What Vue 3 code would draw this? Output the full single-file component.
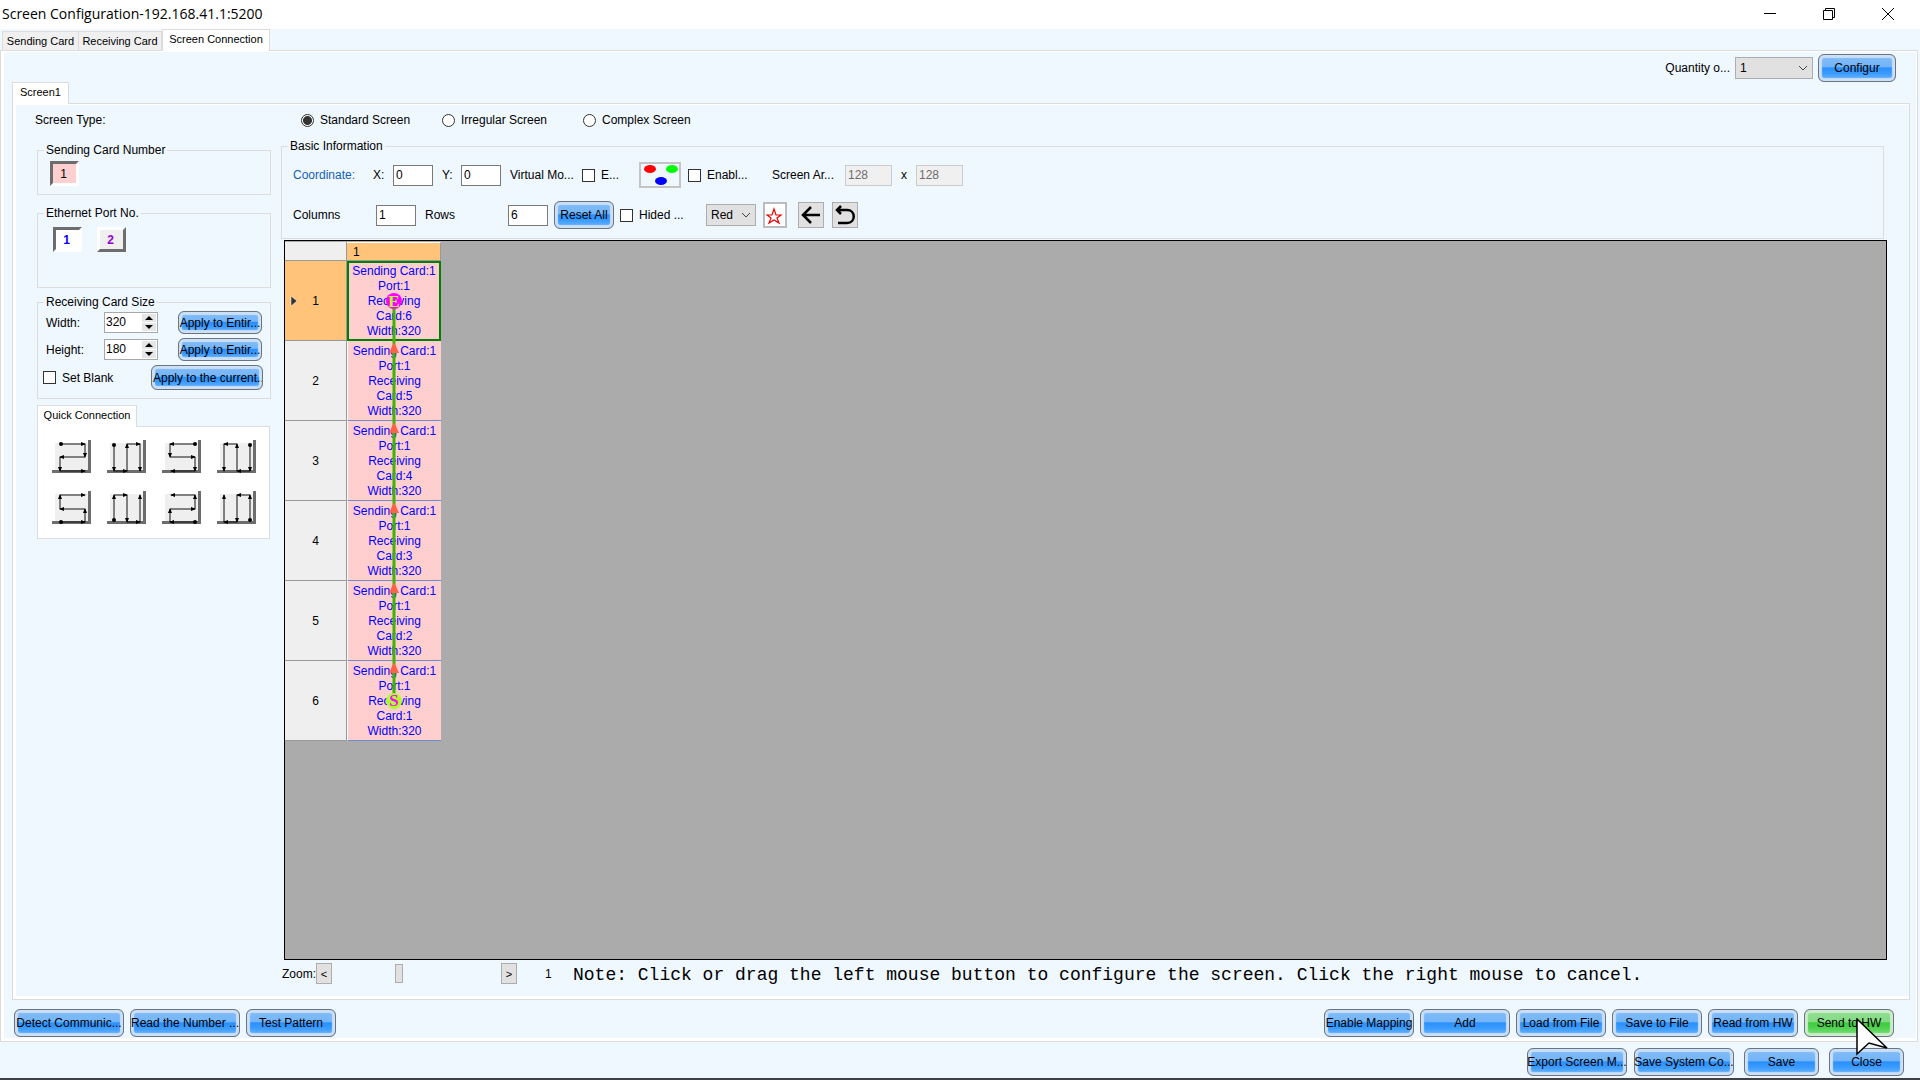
<script setup>
import { ref } from 'vue'

const mainTabs = ['Sending Card', 'Receiving Card', 'Screen Connection']
const activeTab = ref('Screen Connection')
const screenTypes = ['Standard Screen', 'Irregular Screen', 'Complex Screen']
const screenType = ref('Standard Screen')
const cardWidth = ref('320')
const cardHeight = ref('180')
const color = ref('Red')
const quantity = ref('1')

const rows = [1, 2, 3, 4, 5, 6].map((n) => ({ n, card: 7 - n }))

const routes = [
  ['Rows from top left', [[9, 4], [33, 4], [33, 17], [8, 17], [8, 31], [33, 31]]],
  ['Columns from top left', [[7, 5], [7, 31], [20, 31], [20, 4], [33, 4], [33, 31]]],
  ['Rows from top right', [[33, 4], [8, 4], [8, 17], [33, 17], [33, 31], [9, 31]]],
  ['Columns from top right', [[33, 5], [33, 31], [20, 31], [20, 4], [7, 4], [7, 31]]],
  ['Rows from bottom left', [[9, 31], [33, 31], [33, 18], [8, 18], [8, 4], [33, 4]]],
  ['Columns from bottom left', [[7, 29], [7, 4], [20, 4], [20, 31], [33, 31], [33, 4]]],
  ['Rows from bottom right', [[33, 31], [8, 31], [8, 18], [33, 18], [33, 4], [9, 4]]],
  ['Columns from bottom right', [[33, 29], [33, 4], [20, 4], [20, 31], [7, 31], [7, 4]]]
].map(([name, points]) => ({
  name,
  start: points[0],
  line: points.map((p) => p.join(',')).join(' '),
  // one arrow head at the end of every segment
  heads: points.slice(1).map(([x, y], i) => {
    const dx = Math.sign(x - points[i][0])
    const dy = Math.sign(y - points[i][1])
    const bx = x - dx * 4
    const by = y - dy * 4
    return `${x + dx},${y + dy} ${bx + dy * 2},${by + dx * 2} ${bx - dy * 2},${by - dx * 2}`
  })
}))

const leftActions = [
  ['Detect Communic...', 'w110'],
  ['Read the Number ...', 'w110'],
  ['Test Pattern', 'w90']
]
const rightActions = ['Enable Mapping', 'Add', 'Load from File', 'Save to File', 'Read from HW']
</script>

<template>
  <div class="window">
    <header class="titlebar">
      <h1>Screen Configuration-192.168.41.1:5200</h1>
      <div class="controls">
        <button type="button" aria-label="Minimize">
          <svg width="14" height="14"><path d="M1 6.5H13" /></svg>
        </button>
        <button type="button" aria-label="Restore">
          <svg width="14" height="14"><path d="M1.5 3.5H10.500V12.500H1.500ZM3.500 3.500V1.500H12.500V10.500H10.500" /></svg>
        </button>
        <button type="button" aria-label="Close window">
          <svg width="14" height="14"><path d="M1 1L13 13M13 1L1 13" /></svg>
        </button>
      </div>
    </header>

    <nav class="tabs main-tabs">
      <button
        v-for="t in mainTabs"
        :key="t"
        type="button"
        class="tab"
        :class="{ active: t === activeTab }"
        @click="activeTab = t"
      >{{ t }}</button>
    </nav>

    <main class="outer">
      <div class="quantity">
        <label for="qty">Quantity o...</label>
        <div class="select qty">
          <select id="qty" v-model="quantity"><option>1</option><option>2</option></select>
          <svg width="10" height="6"><path d="M1 1L5 5L9 1" /></svg>
        </div>
        <button type="button" class="btn w78">Configur</button>
      </div>

      <div class="tabs screen-tabs">
        <button type="button" class="tab active">Screen1</button>
      </div>

      <section class="inner">
        <div class="types">
          <span class="types-title">Screen Type:</span>
          <label v-for="t in screenTypes" :key="t" class="type">
            <input v-model="screenType" type="radio" name="type" :value="t" />{{ t }}
          </label>
        </div>

        <div class="columns">
          <aside class="side">
            <fieldset class="sending">
              <legend>Sending Card Number</legend>
              <button type="button" class="chip pressed pink">1</button>
            </fieldset>

            <fieldset class="ports">
              <legend>Ethernet Port No.</legend>
              <button type="button" class="chip bold pressed blue">1</button>
              <button type="button" class="chip bold raised purple">2</button>
            </fieldset>

            <fieldset class="size">
              <legend>Receiving Card Size</legend>
              <div class="size-row">
                <label for="cw">Width:</label>
                <div class="spin">
                  <input id="cw" v-model="cardWidth" type="text" />
                  <svg width="14" height="17"><path class="key" d="M0 0H14V8H0ZM0 9H14V17H0Z" /><path d="M3 6H11L7 2ZM3 11H11L7 15Z" /></svg>
                </div>
                <button type="button" class="btn small">Apply to Entir...</button>
              </div>
              <div class="size-row">
                <label for="ch">Height:</label>
                <div class="spin">
                  <input id="ch" v-model="cardHeight" type="text" />
                  <svg width="14" height="17"><path class="key" d="M0 0H14V8H0ZM0 9H14V17H0Z" /><path d="M3 6H11L7 2ZM3 11H11L7 15Z" /></svg>
                </div>
                <button type="button" class="btn small">Apply to Entir...</button>
              </div>
              <div class="blank-row">
                <label class="check"><input type="checkbox" />Set Blank</label>
                <button type="button" class="btn current">Apply to the current...</button>
              </div>
            </fieldset>

            <div class="tabs quick-tabs">
              <button type="button" class="tab active">Quick Connection</button>
            </div>
            <div class="quick">
              <button v-for="r in routes" :key="r.name" type="button" :aria-label="r.name">
                <svg width="39" height="33">
                  <rect x="3" y="3" width="33" height="27" fill="#efefef" />
                  <path d="M36 0H39V33H0V30H36Z" fill="#6d6d6d" />
                  <polyline :points="r.line" fill="none" stroke="#111" />
                  <circle :cx="r.start[0]" :cy="r.start[1]" r="2" />
                  <polygon v-for="h in r.heads" :key="h" :points="h" />
                </svg>
              </button>
            </div>
          </aside>

          <div class="work">
            <fieldset class="basic">
              <legend>Basic Information</legend>
              <div class="basic-row first">
                <span class="coord">Coordinate:</span>
                <label for="px">X:</label>
                <input id="px" class="box" type="text" value="0" />
                <label for="py">Y:</label>
                <input id="py" class="box" type="text" value="0" />
                <span>Virtual Mo...</span>
                <label class="check"><input type="checkbox" />E...</label>
                <button type="button" class="rgb" aria-label="Pixel layout">
                  <svg width="36" height="20">
                    <ellipse cx="8" cy="4" rx="6" ry="4" fill="#f00" />
                    <ellipse cx="30" cy="4" rx="6" ry="4" fill="#0f0" />
                    <ellipse cx="19" cy="16" rx="6" ry="4" fill="#00f" />
                  </svg>
                </button>
                <label class="check"><input type="checkbox" />Enabl...</label>
                <label for="aw">Screen Ar...</label>
                <input id="aw" class="box area" type="text" value="128" disabled />
                <label for="ah">x</label>
                <input id="ah" class="box area" type="text" value="128" disabled />
              </div>
              <div class="basic-row second">
                <label for="cols">Columns</label>
                <input id="cols" class="box" type="text" value="1" />
                <label for="rws">Rows</label>
                <input id="rws" class="box" type="text" value="6" />
                <button type="button" class="btn reset">Reset All</button>
                <label class="check"><input type="checkbox" />Hided ...</label>
                <div class="select color">
                  <select v-model="color" aria-label="Line color"><option>Red</option><option>Green</option></select>
                  <svg width="10" height="6"><path d="M1 1L5 5L9 1" /></svg>
                </div>
                <button type="button" class="tool star" aria-label="Mark">
                  <svg width="18" height="20" fill="none" stroke="#e00" stroke-width="1.2"><path d="M8 4L10 10H15L11 13L13 18L8 15L3 18L5 13L1 10H6Z" /></svg>
                </button>
                <button type="button" class="tool" aria-label="Back">
                  <svg width="24" height="24" fill="none" stroke="#000" stroke-width="2.500"><path d="M21 12H4M12 4L4 12L12 20" /></svg>
                </button>
                <button type="button" class="tool" aria-label="Undo">
                  <svg width="24" height="24" fill="none" stroke="#000" stroke-width="2.500"><path d="M5 20H14C23 20 23 7 14 7H4M8 3L4 7L8 11" /></svg>
                </button>
              </div>
            </fieldset>

            <div class="canvas">
              <div class="sheet">
                <table>
                  <thead>
                    <tr><td></td><th scope="col">1</th></tr>
                  </thead>
                  <tbody>
                    <tr v-for="r in rows" :key="r.n" :class="{ selected: r.n === 1 }">
                      <th scope="row">{{ r.n }}</th>
                      <td>Sending Card:1<br />Port:1<br />Receiving<br />Card:{{ r.card }}<br />Width:320</td>
                    </tr>
                  </tbody>
                </table>
                <svg class="marker" width="9" height="12"><path d="M1 1V11L7 6Z" fill="#333" stroke="#fff" stroke-width="0.5" /></svg>
                <svg class="cable" width="20" height="480">
                  <path d="M10 40V440" stroke="#3cb400" stroke-width="3" />
                  <circle cx="10" cy="40" r="8" fill="#f0f" />
                  <text x="10" y="46" class="glyph" fill="#adff2f">E</text>
                  <circle cx="10" cy="440" r="8" fill="#adff2f" />
                  <text x="10" y="445" class="glyph" fill="#f0f">S</text>
                  <path v-for="r in rows.slice(1)" :key="r.n" :d="`M5 ${r.n * 80 - 68}H15L10 ${r.n * 80 - 79}Z`" fill="#ff6347" />
                </svg>
              </div>
            </div>

            <div class="status">
              <span class="zoom-label">Zoom:</span>
              <div class="zoom">
                <button type="button" aria-label="Zoom out">&lt;</button>
                <input type="range" min="0" max="100" value="39" aria-label="Zoom" />
                <button type="button" aria-label="Zoom in">&gt;</button>
              </div>
              <span class="zoom-value">1</span>
              <p class="note">Note: Click or drag the left mouse button to configure the screen. Click the right mouse to cancel.</p>
            </div>
          </div>
        </div>
      </section>

      <div class="actions">
        <button v-for="[name, size] in leftActions" :key="name" type="button" class="btn" :class="size">{{ name }}</button>
        <span class="spacer"></span>
        <button v-for="name in rightActions" :key="name" type="button" class="btn w90">{{ name }}</button>
        <div class="send">
          <button type="button" class="btn w90 green">Send to HW</button>
          <svg class="cursor" width="34" height="40"><path d="M1 1V36L13 25L31 30Z" fill="#fff" stroke="#000" stroke-width="1.500" /></svg>
        </div>
      </div>
    </main>

    <footer class="footer">
      <button type="button" class="btn w100">Export Screen M...</button>
      <button type="button" class="btn w100">Save System Co...</button>
      <button type="button" class="btn w75">Save</button>
      <button type="button" class="btn w75">Close</button>
    </footer>
  </div>
</template>

<style>
body {
  margin: 0;
}
</style>

<style scoped>
* {
  box-sizing: border-box;
}
.window {
  display: flex;
  flex-direction: column;
  min-height: 100vh;
  background: #eff7ff;
  border-bottom: 2px solid #404148;
  color: #000;
  font: 12px/14px "Liberation Sans", Arial, sans-serif;
  white-space: nowrap;
}
button,
input,
select {
  margin: 0;
  padding: 0;
  border: 0;
  border-radius: 0;
  background: none;
  color: inherit;
  font: inherit;
  white-space: nowrap;
}
svg {
  display: block;
}

.titlebar {
  display: flex;
  justify-content: space-between;
  height: 29px;
  padding: 0 25px 1px 2px;
  background: #fff;
}
h1 {
  margin: 0;
  font: 14px/28px "Open Sans", "Noto Sans", sans-serif;
}
.controls {
  display: flex;
  align-items: center;
  gap: 45px;
}
.controls svg {
  fill: none;
  stroke: #000;
}

.tabs {
  display: flex;
  align-items: flex-end;
  position: relative;
  z-index: 1;
}
.tab {
  height: 19px;
  padding: 0;
  border: 1px solid #dcdcdc;
  border-bottom: 0;
  background: #f0f0f0;
  font-size: 11px;
}
.tab + .tab {
  border-left: 0;
}
.tab.active {
  height: 22px;
  margin-bottom: -1px;
  padding-bottom: 3px;
  background: #fff;
}
.main-tabs {
  height: 21px;
  padding-left: 2px;
}
.main-tabs .tab {
  width: 77px;
}
.main-tabs .tab + .tab {
  width: 83px;
}
.main-tabs .tab.active {
  width: 108px;
  border-left: 1px solid #dcdcdc;
}

.outer {
  flex: 1;
  display: flex;
  flex-direction: column;
  margin-right: 2px;
  padding: 0 7px 0 8px;
  border: 1px solid #dcdcdc;
  box-shadow: inset 3px 0 #fff, inset 0 -3px #fff, inset -1px 1px #fff;
}
.quantity {
  display: flex;
  align-items: center;
  justify-content: flex-end;
  gap: 5px;
  height: 31px;
  padding: 3px 14px 0 0;
}
.select {
  position: relative;
  height: 22px;
}
.select select {
  appearance: none;
  width: 100%;
  height: 100%;
  padding: 0 4px;
  border: 1px solid #adadad;
  background: #e1e1e1;
}
.select svg {
  position: absolute;
  right: 5px;
  top: 8px;
  fill: none;
  stroke: #444;
  pointer-events: none;
}
.qty {
  width: 78px;
}
.color {
  width: 50px;
}

.btn {
  display: inline-flex;
  align-items: center;
  justify-content: center;
  flex: none;
  height: 28px;
  border: 1px solid #6c7480;
  border-radius: 6px;
  background: linear-gradient(#84bdf9 0, #74b5f8 44%, #2a90fd 50%, #3a9bff 70%, #74b9ff 100%);
  box-shadow: inset 0 0 1px 3px #cbdff6;
}
.btn.green {
  background: linear-gradient(#94e094 0, #84da84 44%, #3ecb3e 50%, #50d250 70%, #84e084 100%);
  box-shadow: inset 0 0 1px 3px #cbeccb;
}
.w75 {
  width: 75px;
}
.w78 {
  width: 78px;
}
.w90 {
  width: 90px;
}
.w100 {
  width: 100px;
}
.w110 {
  width: 110px;
}

.screen-tabs {
  height: 21px;
  padding-left: 3px;
}
.screen-tabs .tab {
  width: 57px;
}
.inner {
  flex: 1;
  display: flex;
  flex-direction: column;
  margin: 0 0 0 3px;
  padding: 1px 22px 3px 3px;
  border: 1px solid #dcdcdc;
  box-shadow: inset 3px 0 #fff, inset 0 -3px #fff, inset 0 1px #fff;
}
.types {
  display: flex;
  align-items: center;
  height: 30px;
  padding-left: 19px;
}
.types-title {
  width: 266px;
}
.type {
  display: flex;
  align-items: center;
  gap: 6px;
  width: 141px;
}
.type input {
  appearance: none;
  width: 13px;
  height: 13px;
  border: 1px solid #333;
  border-radius: 50%;
  background: #fff;
}
.type input:checked {
  background: radial-gradient(circle, #333 0 4px, #fff 5px);
}
.columns {
  flex: 1;
  display: flex;
  gap: 10px;
  padding-left: 21px;
}
.side {
  flex: none;
  width: 234px;
  padding-top: 8px;
}
fieldset {
  min-width: 0;
  margin: 0;
  padding: 0;
  border: 1px solid #dcdcdc;
}
legend {
  padding: 0 2px;
}
.sending {
  height: 52px;
  padding: 4px 12px;
}
.sending legend {
  margin-left: -6px;
}
.ports {
  display: flex;
  gap: 15px;
  height: 82px;
  margin-top: 11px;
  padding: 7px 15px;
}
.ports legend {
  margin-left: -9px;
}
.size {
  height: 104px;
  margin-top: 7px;
  padding: 0 7px 0 8px;
}
.size legend {
  margin-left: -2px;
}
.chip {
  width: 29px;
  height: 25px;
  padding-right: 2px;
  border: 3px solid #fff;
  background: #efefef;
}
.pressed {
  border-top-color: #6d6d6d;
  border-left-color: #6d6d6d;
}
.raised {
  border-right-color: #6d6d6d;
  border-bottom-color: #6d6d6d;
}
.pink {
  background: #ffd0d0;
}
.bold {
  font-weight: 700;
}
.blue {
  background: #fff;
  color: #00f;
}
.purple {
  color: #9400d3;
}
.size-row {
  display: flex;
  align-items: center;
  height: 27px;
}
.size-row label {
  width: 58px;
}
.size-row .btn {
  margin-left: 20px;
}
.spin {
  display: flex;
  width: 54px;
  height: 21px;
  padding: 1px;
  border: 1px solid #a8a8a8;
  background: #fff;
}
.spin input {
  width: 36px;
  height: 15px;
}
.key {
  fill: #e6e6e6;
}
.small {
  width: 84px;
  height: 23px;
}
.blank-row {
  display: flex;
  align-items: center;
  justify-content: space-between;
  height: 29px;
  margin-left: -3px;
}
.current {
  justify-content: flex-start;
  width: 112px;
  height: 25px;
  padding-left: 1px;
  overflow: hidden;
}
.check {
  display: flex;
  align-items: center;
  gap: 6px;
}
.check input {
  appearance: none;
  width: 13px;
  height: 13px;
  border: 1px solid #333;
  background: #fff;
}
.quick-tabs {
  height: 21px;
  margin-top: 6px;
}
.quick-tabs .tab {
  width: 100px;
}
.quick {
  display: grid;
  grid-template-columns: repeat(4, 39px);
  gap: 18px 16px;
  width: 233px;
  padding: 13px 14px 14px;
  border: 1px solid #dcdcdc;
  background: #fff;
}

.work {
  flex: 1;
  display: flex;
  flex-direction: column;
  min-width: 0;
  padding-top: 4px;
}
.basic {
  height: 100px;
  margin-right: 3px;
  padding: 7px 11px 0;
}
.basic legend {
  margin-left: -5px;
}
.basic-row {
  display: grid;
  align-items: center;
}
.first {
  height: 30px;
  grid-template-columns: 80px 20px 49px 19px 49px 72px 57px 49px 84px 73px 56px 15px 47px;
}
.second {
  height: 30px;
  margin-top: 10px;
  grid-template-columns: 83px 49px 83px 46px 66px 86px 57px 35px 34px 26px;
}
.coord {
  color: #1560b8;
}
.box {
  width: 40px;
  height: 21px;
  padding: 0 2px;
  border: 1px solid #7a7a7a;
  background: #fff;
}
.area {
  width: 47px;
  border: 1px solid #ccc;
  background: #f0f0f0;
  color: #6d6d6d;
}
.rgb {
  width: 42px;
  height: 26px;
  padding: 1px;
  border: 2px solid #c4c4c4;
}
.rgb svg {
  width: 36px;
  height: 20px;
}
.reset {
  width: 60px;
}
.tool {
  width: 26px;
  height: 26px;
  border: 1px solid #adadad;
  background: #e1e1e1;
}
.star {
  width: 24px;
  padding: 0 1px;
  border: 2px solid #bcbcbc;
  background: #fff;
}

.canvas {
  flex: 1;
  margin: 1px 0 0 3px;
  padding: 1px 0;
  border: 1px solid #000;
  background: #ababab;
}
.sheet {
  position: relative;
  width: 156px;
}
table {
  width: 156px;
  border-collapse: separate;
  border-spacing: 0;
  table-layout: fixed;
}
th,
td {
  padding: 0;
  font-weight: 400;
}
thead td,
thead th {
  height: 19px;
  border-bottom: 1px solid #999;
  border-right: 1px solid #999;
}
thead td {
  width: 62px;
  background: #efefef;
}
thead th {
  padding-left: 6px;
  border-top: 1px solid #fff;
  background: #ffc37a;
  text-align: left;
}
tbody th,
tbody td {
  height: 80px;
}
tbody th {
  border-right: 1px solid #999;
  border-bottom: 1px solid #999;
  background: #efefef;
}
tbody td {
  padding-top: 1px;
  border-bottom: 1px solid #6f8ed0;
  border-left: 1px solid #fff;
  background: #ffcfcf;
  color: #00f;
  line-height: 15px;
  text-align: center;
}
tbody .selected th {
  background: #ffc37a;
}
tbody .selected td {
  padding: 0;
  border: 2px solid #008000;
}
.marker {
  position: absolute;
  left: 5px;
  top: 53px;
}
.cable {
  position: absolute;
  left: 99px;
  top: 19px;
}
.glyph {
  font: bold 17px "Liberation Serif", serif;
  text-anchor: middle;
}

.status {
  display: flex;
  align-items: center;
  height: 36px;
  padding: 0 0 9px 1px;
}
.zoom-label {
  width: 34px;
}
.zoom {
  display: flex;
  width: 201px;
}
.zoom button {
  width: 16px;
  height: 21px;
  border: 1px solid #adadad;
  background: #e1e1e1;
  font-size: 11px;
}
.zoom input {
  appearance: none;
  flex: 1;
  min-width: 0;
  height: 21px;
}
.zoom input::-webkit-slider-thumb {
  appearance: none;
  width: 8px;
  height: 19px;
  border: 1px solid #adadad;
  background: #e1e1e1;
}
.zoom-value {
  margin-left: 28px;
  width: 28px;
}
.note {
  height: 21px;
  margin: 0;
  overflow: hidden;
  font: 18px/24px "Liberation Mono", "Courier New", monospace;
}

.actions {
  display: flex;
  align-items: center;
  gap: 6px;
  height: 41px;
  padding: 4px 16px 0 5px;
}
.spacer {
  flex: 1;
}
.send {
  position: relative;
}
.cursor {
  position: absolute;
  left: 52px;
  top: 9px;
  z-index: 2;
}
.footer {
  display: flex;
  align-items: center;
  justify-content: flex-end;
  gap: 10px;
  height: 36px;
  padding: 4px 16px 0 0;
}
.footer .w100 + .w100 {
  margin-left: -3px;
}
</style>
